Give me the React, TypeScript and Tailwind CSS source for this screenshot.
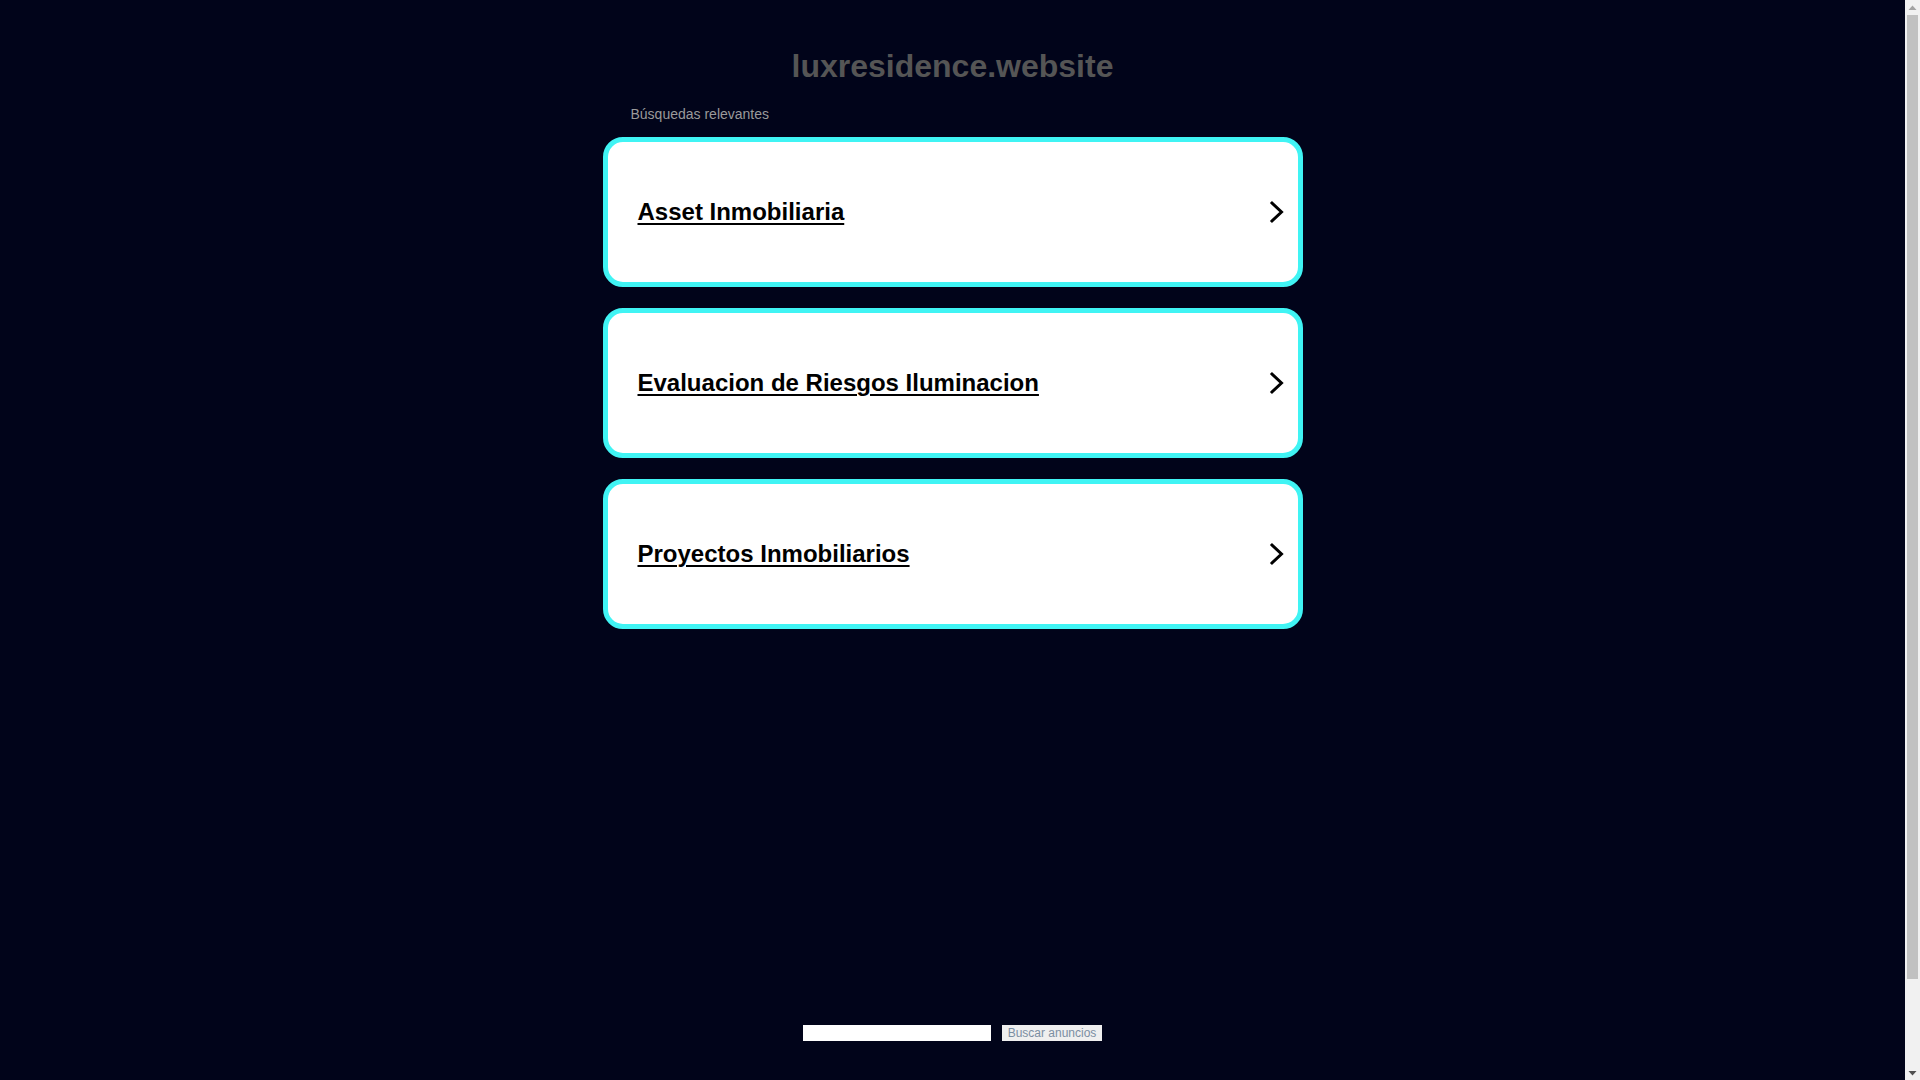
import React from "react";

const items = [
  "Asset Inmobiliaria",
  "Evaluacion de Riesgos Iluminacion",
  "Proyectos Inmobiliarios",
];

function Chevron() {
  return (
    <svg width="16" height="24" viewBox="0 0 16 24" className="shrink-0">
      <polyline
        points="3,3 12.5,12 3,21"
        fill="none"
        stroke="#000"
        strokeWidth="3"
        strokeLinecap="square"
        strokeLinejoin="miter"
      />
    </svg>
  );
}

function ScrollBar() {
  return (
    <div className="flex h-full w-[15px] shrink-0 flex-col bg-[#f1f1f1]">
      <div className="flex h-[15px] items-center justify-center">
        <svg width="9" height="6" viewBox="0 0 9 6">
          <polygon points="4.5,0.5 8.5,5 0.5,5" fill="#a3a3a3" />
        </svg>
      </div>
      <div className="mx-[2px] h-[964px] bg-[#c1c1c1]" />
      <div className="flex-1" />
      <div className="flex h-[15px] items-center justify-center">
        <svg width="9" height="6" viewBox="0 0 9 6">
          <polygon points="0.5,1 8.5,1 4.5,5.5" fill="#505050" />
        </svg>
      </div>
    </div>
  );
}

export default function App() {
  return (
    <div className="flex h-screen overflow-hidden bg-[#01041a] font-['Liberation_Sans',Arial,sans-serif]">
      <main className="min-h-[1176px] flex-1">
        <div className="mx-auto w-[700px] pt-[48px]">
          <h1 className="text-center text-[32px] font-bold leading-[36px] text-[#555555]">
            luxresidence.website
          </h1>
          <p className="mt-[22px] ml-[28px] text-[14px] leading-[16px] text-[#9a9a9a]">
            Búsquedas relevantes
          </p>
          <div className="mt-[15px] flex flex-col gap-[21px]">
            {items.map((t) => (
              <a
                key={t}
                href="#"
                className="flex h-[150px] items-center justify-between rounded-[20px] border-[5px] border-[#40f4f4] bg-white pl-[30px] pr-[13px]"
              >
                <span className="text-[24px] font-bold leading-[28px] text-black underline decoration-2 underline-offset-[3px]">
                  {t}
                </span>
                <Chevron />
              </a>
            ))}
          </div>
        </div>
        <div className="mt-[396px] flex justify-center gap-[11px]">
          <input
            type="text"
            className="h-[16px] w-[188px] border-0 bg-white p-0 outline-none"
          />
          <button className="h-[16px] bg-[#efefef] px-[6px] text-[12px] leading-[16px] text-[#7b8ea2]">
            Buscar anuncios
          </button>
        </div>
      </main>
      <ScrollBar />
    </div>
  );
}
